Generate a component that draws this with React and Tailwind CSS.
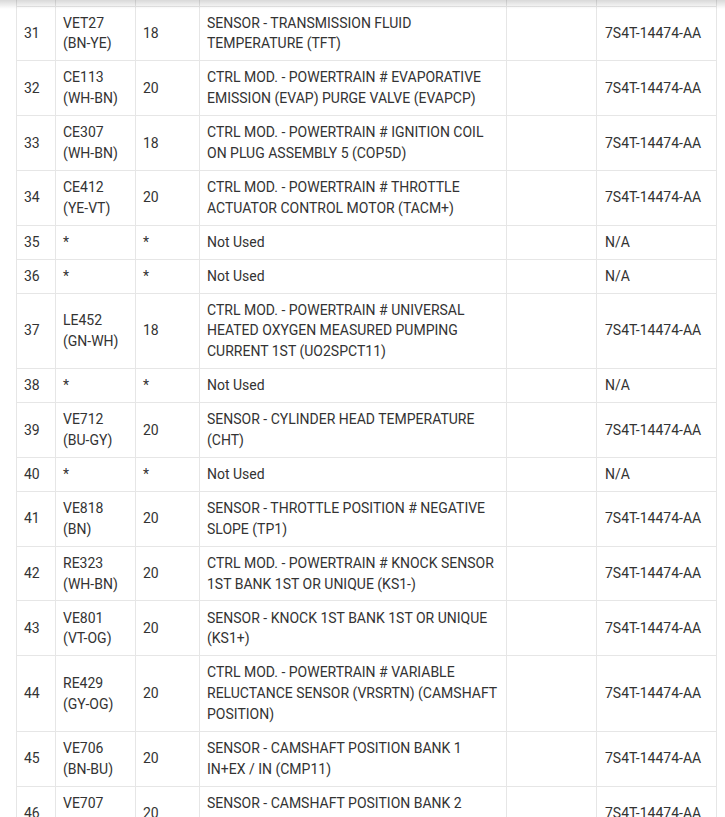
import React from 'react';

const rows = [
  ['31', ['VET27', '(BN-YE)'], '18', ['SENSOR - TRANSMISSION FLUID', 'TEMPERATURE (TFT)'], '7S4T-14474-AA'],
  ['32', ['CE113', '(WH-BN)'], '20', ['CTRL MOD. - POWERTRAIN # EVAPORATIVE', 'EMISSION (EVAP) PURGE VALVE (EVAPCP)'], '7S4T-14474-AA'],
  ['33', ['CE307', '(WH-BN)'], '18', ['CTRL MOD. - POWERTRAIN # IGNITION COIL', 'ON PLUG ASSEMBLY 5 (COP5D)'], '7S4T-14474-AA'],
  ['34', ['CE412', '(YE-VT)'], '20', ['CTRL MOD. - POWERTRAIN # THROTTLE', 'ACTUATOR CONTROL MOTOR (TACM+)'], '7S4T-14474-AA'],
  ['35', ['*'], '*', ['Not Used'], 'N/A'],
  ['36', ['*'], '*', ['Not Used'], 'N/A'],
  ['37', ['LE452', '(GN-WH)'], '18', ['CTRL MOD. - POWERTRAIN # UNIVERSAL', 'HEATED OXYGEN MEASURED PUMPING', 'CURRENT 1ST (UO2SPCT11)'], '7S4T-14474-AA'],
  ['38', ['*'], '*', ['Not Used'], 'N/A'],
  ['39', ['VE712', '(BU-GY)'], '20', ['SENSOR - CYLINDER HEAD TEMPERATURE', '(CHT)'], '7S4T-14474-AA'],
  ['40', ['*'], '*', ['Not Used'], 'N/A'],
  ['41', ['VE818', '(BN)'], '20', ['SENSOR - THROTTLE POSITION # NEGATIVE', 'SLOPE (TP1)'], '7S4T-14474-AA'],
  ['42', ['RE323', '(WH-BN)'], '20', ['CTRL MOD. - POWERTRAIN # KNOCK SENSOR', '1ST BANK 1ST OR UNIQUE (KS1-)'], '7S4T-14474-AA'],
  ['43', ['VE801', '(VT-OG)'], '20', ['SENSOR - KNOCK 1ST BANK 1ST OR UNIQUE', '(KS1+)'], '7S4T-14474-AA'],
  ['44', ['RE429', '(GY-OG)'], '20', ['CTRL MOD. - POWERTRAIN # VARIABLE', 'RELUCTANCE SENSOR (VRSRTN) (CAMSHAFT', 'POSITION)'], '7S4T-14474-AA'],
  ['45', ['VE706', '(BN-BU)'], '20', ['SENSOR - CAMSHAFT POSITION BANK 1', 'IN+EX / IN (CMP11)'], '7S4T-14474-AA'],
  ['46', ['VE707', '(BN-GY)'], '20', ['SENSOR - CAMSHAFT POSITION BANK 2', 'IN+EX / IN (CMP21)'], '7S4T-14474-AA'],
];

const cell = 'border border-[#e6e6e6] px-[7px] py-[6.1px] align-middle';

const Lines = ({ lines }) => (
  <>
    {lines.map((l, i) => (
      <div key={i}>{l}</div>
    ))}
  </>
);

const App = () => (
  <div className="relative h-[817px] overflow-hidden bg-white" style={{ fontFamily: 'Roboto, "Liberation Sans", sans-serif' }}>
    <div className="pointer-events-none absolute inset-x-0 top-0 z-10 h-[9px] bg-gradient-to-b from-black/15 to-transparent" />
    <div className="px-4">
      <table className="w-[700px] table-fixed border-collapse text-[14px] leading-[20.8px] text-[#333]">
        <colgroup>
          <col className="w-[39px]" />
          <col className="w-[80px]" />
          <col className="w-[64px]" />
          <col className="w-[307px]" />
          <col className="w-[90px]" />
          <col className="w-[120px]" />
        </colgroup>
        <tbody>
          <tr className="h-[6px]">
            <td className="border border-t-0 border-[#e6e6e6] p-0" />
            <td className="border border-t-0 border-[#e6e6e6] p-0" />
            <td className="border border-t-0 border-[#e6e6e6] p-0" />
            <td className="border border-t-0 border-[#e6e6e6] p-0" />
            <td className="border border-t-0 border-[#e6e6e6] p-0" />
            <td className="border border-t-0 border-[#e6e6e6] p-0" />
          </tr>
          {rows.map(([pin, wire, gauge, desc, part]) => (
            <tr key={pin}>
              <td className={cell}>{pin}</td>
              <td className={cell}>
                <Lines lines={wire} />
              </td>
              <td className={cell}>{gauge}</td>
              <td className={cell}>
                <Lines lines={desc} />
              </td>
              <td className={cell} />
              <td className={`${cell} pl-[8px]`}>{part}</td>
            </tr>
          ))}
        </tbody>
      </table>
    </div>
  </div>
);

export default App;
